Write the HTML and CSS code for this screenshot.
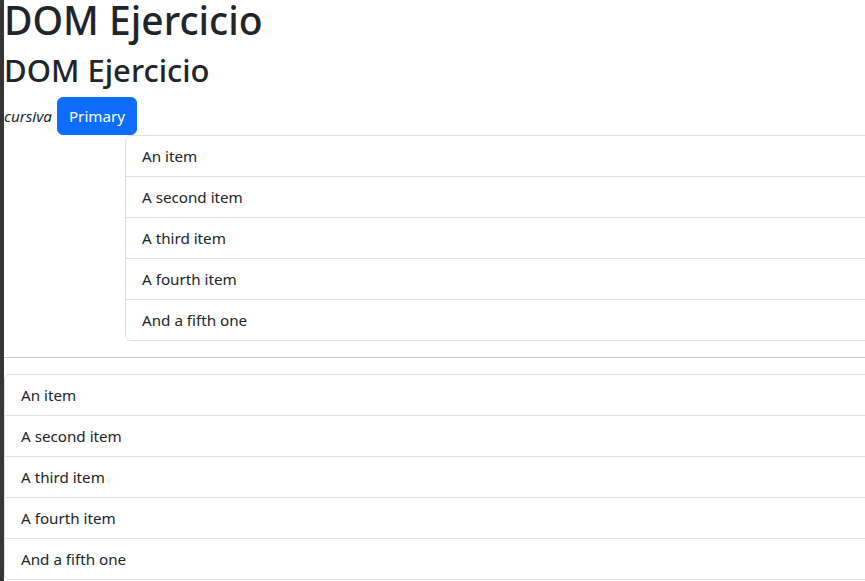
FILE: index.html
```html
<!DOCTYPE html>
<html lang="es">
<head>
<meta charset="utf-8">
<title>DOM Ejercicio</title>
<link rel="stylesheet" href="styles.css">
</head>
<body>
<div class="edge"></div>
<main class="page">
  <h1 class="title">DOM Ejercicio</h1>
  <h2 class="subtitle">DOM Ejercicio</h2>
  <div class="row">
    <em class="cursive">cursiva</em>
    <button class="btn" type="button">Primary</button>
  </div>
  <ul class="list list-offset">
    <li class="item">An item</li>
    <li class="item">A second item</li>
    <li class="item">A third item</li>
    <li class="item">A fourth item</li>
    <li class="item">And a fifth one</li>
  </ul>
  <hr class="rule">
  <ul class="list list-full">
    <li class="item">An item</li>
    <li class="item">A second item</li>
    <li class="item">A third item</li>
    <li class="item">A fourth item</li>
    <li class="item">And a fifth one</li>
  </ul>
</main>
</body>
</html>
```
FILE: styles.css
```css
html, body {
  margin: 0;
  height: 100%;
  overflow: hidden;
}
body {
  display: flex;
  background: #fff;
  color: #212529;
  font-family: "Noto Sans", "Open Sans", sans-serif;
  font-size: 15.2px;
  line-height: 24px;
}
.edge {
  width: 4px;
  flex: none;
  background: #353535;
}
.page {
  flex: 1;
  min-width: 0;
}
.title {
  margin: 0 0 12px;
  font-size: 39px;
  font-weight: 500;
  line-height: 40px;
  white-space: nowrap;
}
.subtitle {
  margin: 0 0 8px;
  font-size: 31px;
  font-weight: 500;
  line-height: 37px;
  white-space: nowrap;
}
.row {
  display: flex;
  align-items: baseline;
  gap: 5px;
}
.cursive {
  font-style: italic;
}
.btn {
  font: inherit;
  color: #fff;
  background: #0d6efd;
  border: 1px solid #0d6efd;
  border-radius: 6px;
  padding: 6px 11px;
  line-height: 24px;
}
.list {
  list-style: none;
  margin: 0;
  padding: 0;
  border: 1px solid #dee2e6;
  border-radius: 6px;
}
.list-offset {
  margin-left: 121px;
  width: 900px;
}
.list-full {
  width: 1000px;
}
.item {
  padding: 8px 16px;
  line-height: 24px;
  border-top: 1px solid #dee2e6;
}
.item:first-child {
  border-top: 0;
}
.rule {
  margin: 16px 0;
  border: 0;
  border-top: 1px solid #212529;
  opacity: 0.25;
}
```
